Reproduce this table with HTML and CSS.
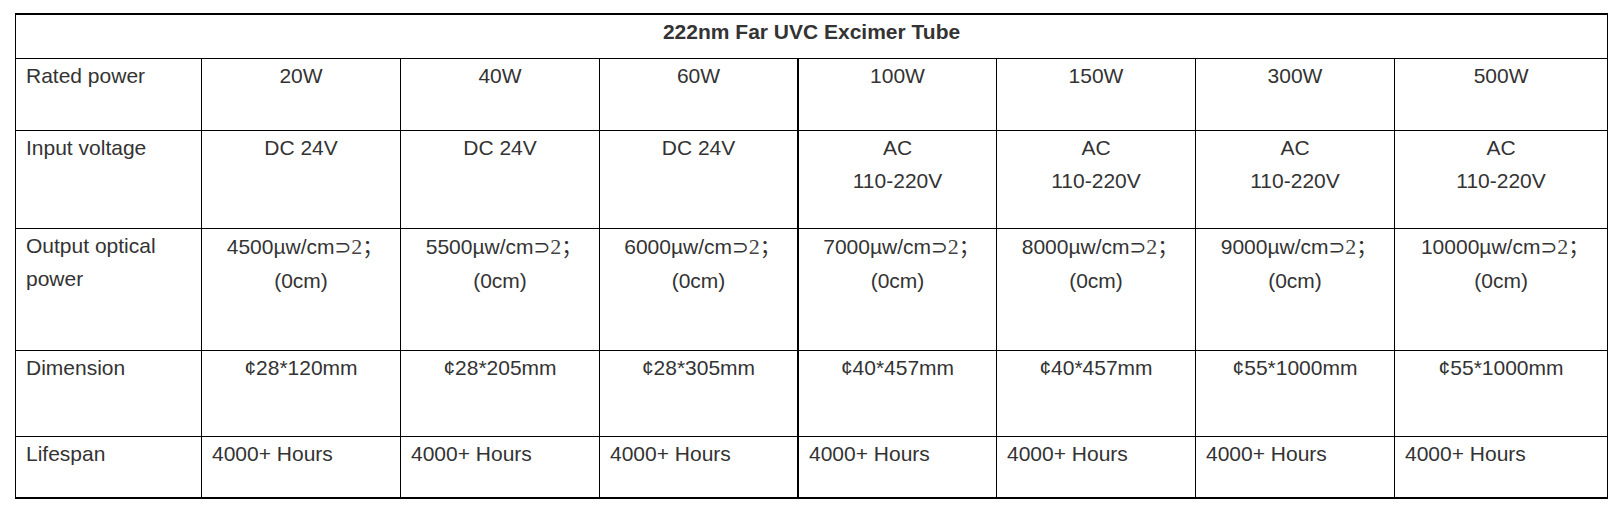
FILE: index.html
```html
<!DOCTYPE html>
<html lang="en">
<head>
<meta charset="utf-8">
<title>222nm Far UVC Excimer Tube</title>
<link rel="stylesheet" href="styles.css">
</head>
<body>
<table class="spec">
  <colgroup>
    <col class="c-label">
    <col class="c-std">
    <col class="c-std">
    <col class="c-std">
    <col class="c-narrow">
    <col class="c-std">
    <col class="c-std">
    <col class="c-wide">
  </colgroup>
  <tr class="r-title">
    <td class="title" colspan="8">222nm Far UVC Excimer Tube</td>
  </tr>
  <tr class="r-power">
    <td class="label">Rated power</td>
    <td>20W</td>
    <td>40W</td>
    <td class="split">60W</td>
    <td>100W</td>
    <td>150W</td>
    <td>300W</td>
    <td>500W</td>
  </tr>
  <tr class="r-voltage">
    <td class="label">Input voltage</td>
    <td>DC 24V</td>
    <td>DC 24V</td>
    <td class="split">DC 24V</td>
    <td>AC<br>110-220V</td>
    <td>AC<br>110-220V</td>
    <td>AC<br>110-220V</td>
    <td>AC<br>110-220V</td>
  </tr>
  <tr class="r-optical">
    <td class="label">Output optical<br>power</td>
    <td>4500µw/cm<span class="sym">⊃</span><span class="ser">2</span><span class="semi">；</span><br>(0cm)</td>
    <td>5500µw/cm<span class="sym">⊃</span><span class="ser">2</span><span class="semi">；</span><br>(0cm)</td>
    <td class="split">6000µw/cm<span class="sym">⊃</span><span class="ser">2</span><span class="semi">；</span><br>(0cm)</td>
    <td>7000µw/cm<span class="sym">⊃</span><span class="ser">2</span><span class="semi">；</span><br>(0cm)</td>
    <td>8000µw/cm<span class="sym">⊃</span><span class="ser">2</span><span class="semi">；</span><br>(0cm)</td>
    <td>9000µw/cm<span class="sym">⊃</span><span class="ser">2</span><span class="semi">；</span><br>(0cm)</td>
    <td>10000µw/cm<span class="sym">⊃</span><span class="ser">2</span><span class="semi">；</span><br>(0cm)</td>
  </tr>
  <tr class="r-dim">
    <td class="label">Dimension</td>
    <td>¢28*120mm</td>
    <td>¢28*205mm</td>
    <td class="split">¢28*305mm</td>
    <td>¢40*457mm</td>
    <td>¢40*457mm</td>
    <td>¢55*1000mm</td>
    <td>¢55*1000mm</td>
  </tr>
  <tr class="r-life">
    <td class="label">Lifespan</td>
    <td class="left">4000+ Hours</td>
    <td class="left">4000+ Hours</td>
    <td class="left split">4000+ Hours</td>
    <td class="left">4000+ Hours</td>
    <td class="left">4000+ Hours</td>
    <td class="left">4000+ Hours</td>
    <td class="left">4000+ Hours</td>
  </tr>
</table>
</body>
</html>
```
FILE: styles.css
```css
html, body {
  margin: 0;
  padding: 0;
  background: #ffffff;
}

body {
  padding: 13px 0 0 15px;
  font-family: Arial, "Liberation Sans", sans-serif;
  color: #333333;
}

.spec {
  border-collapse: separate;
  border-spacing: 0;
  table-layout: fixed;
  width: 1593px;
  border-top: 2px solid #000;
  border-left: 1px solid #000;
  font-size: 21px;
  line-height: 33px;
}

.c-label { width: 186px; }
.c-std { width: 199px; }
.c-narrow { width: 198px; }
.c-wide { width: 213px; }

.spec td {
  box-sizing: border-box;
  border-right: 1px solid #000;
  border-bottom: 1px solid #000;
  padding: 0 10px;
  vertical-align: top;
  text-align: center;
  white-space: nowrap;
}

.spec td.split {
  border-right-width: 2px;
}

.spec td.label,
.spec td.left {
  text-align: left;
}

.spec td.title {
  font-weight: bold;
  text-align: center;
}

.r-title { height: 44px; }
.r-power { height: 72px; }
.r-voltage { height: 98px; }
.r-optical { height: 122px; }
.r-dim { height: 86px; }
.r-life { height: 62px; }

.r-life td {
  border-bottom-width: 2px;
}

.sym {
  font-family: "DejaVu Sans", sans-serif;
  font-size: 20px;
}

.ser {
  font-family: "Liberation Serif", serif;
  font-size: 22px;
  color: #444444;
}

.semi {
  font-family: "Noto Sans CJK SC", sans-serif;
  font-size: 21px;
  margin-right: -8px;
}
```
